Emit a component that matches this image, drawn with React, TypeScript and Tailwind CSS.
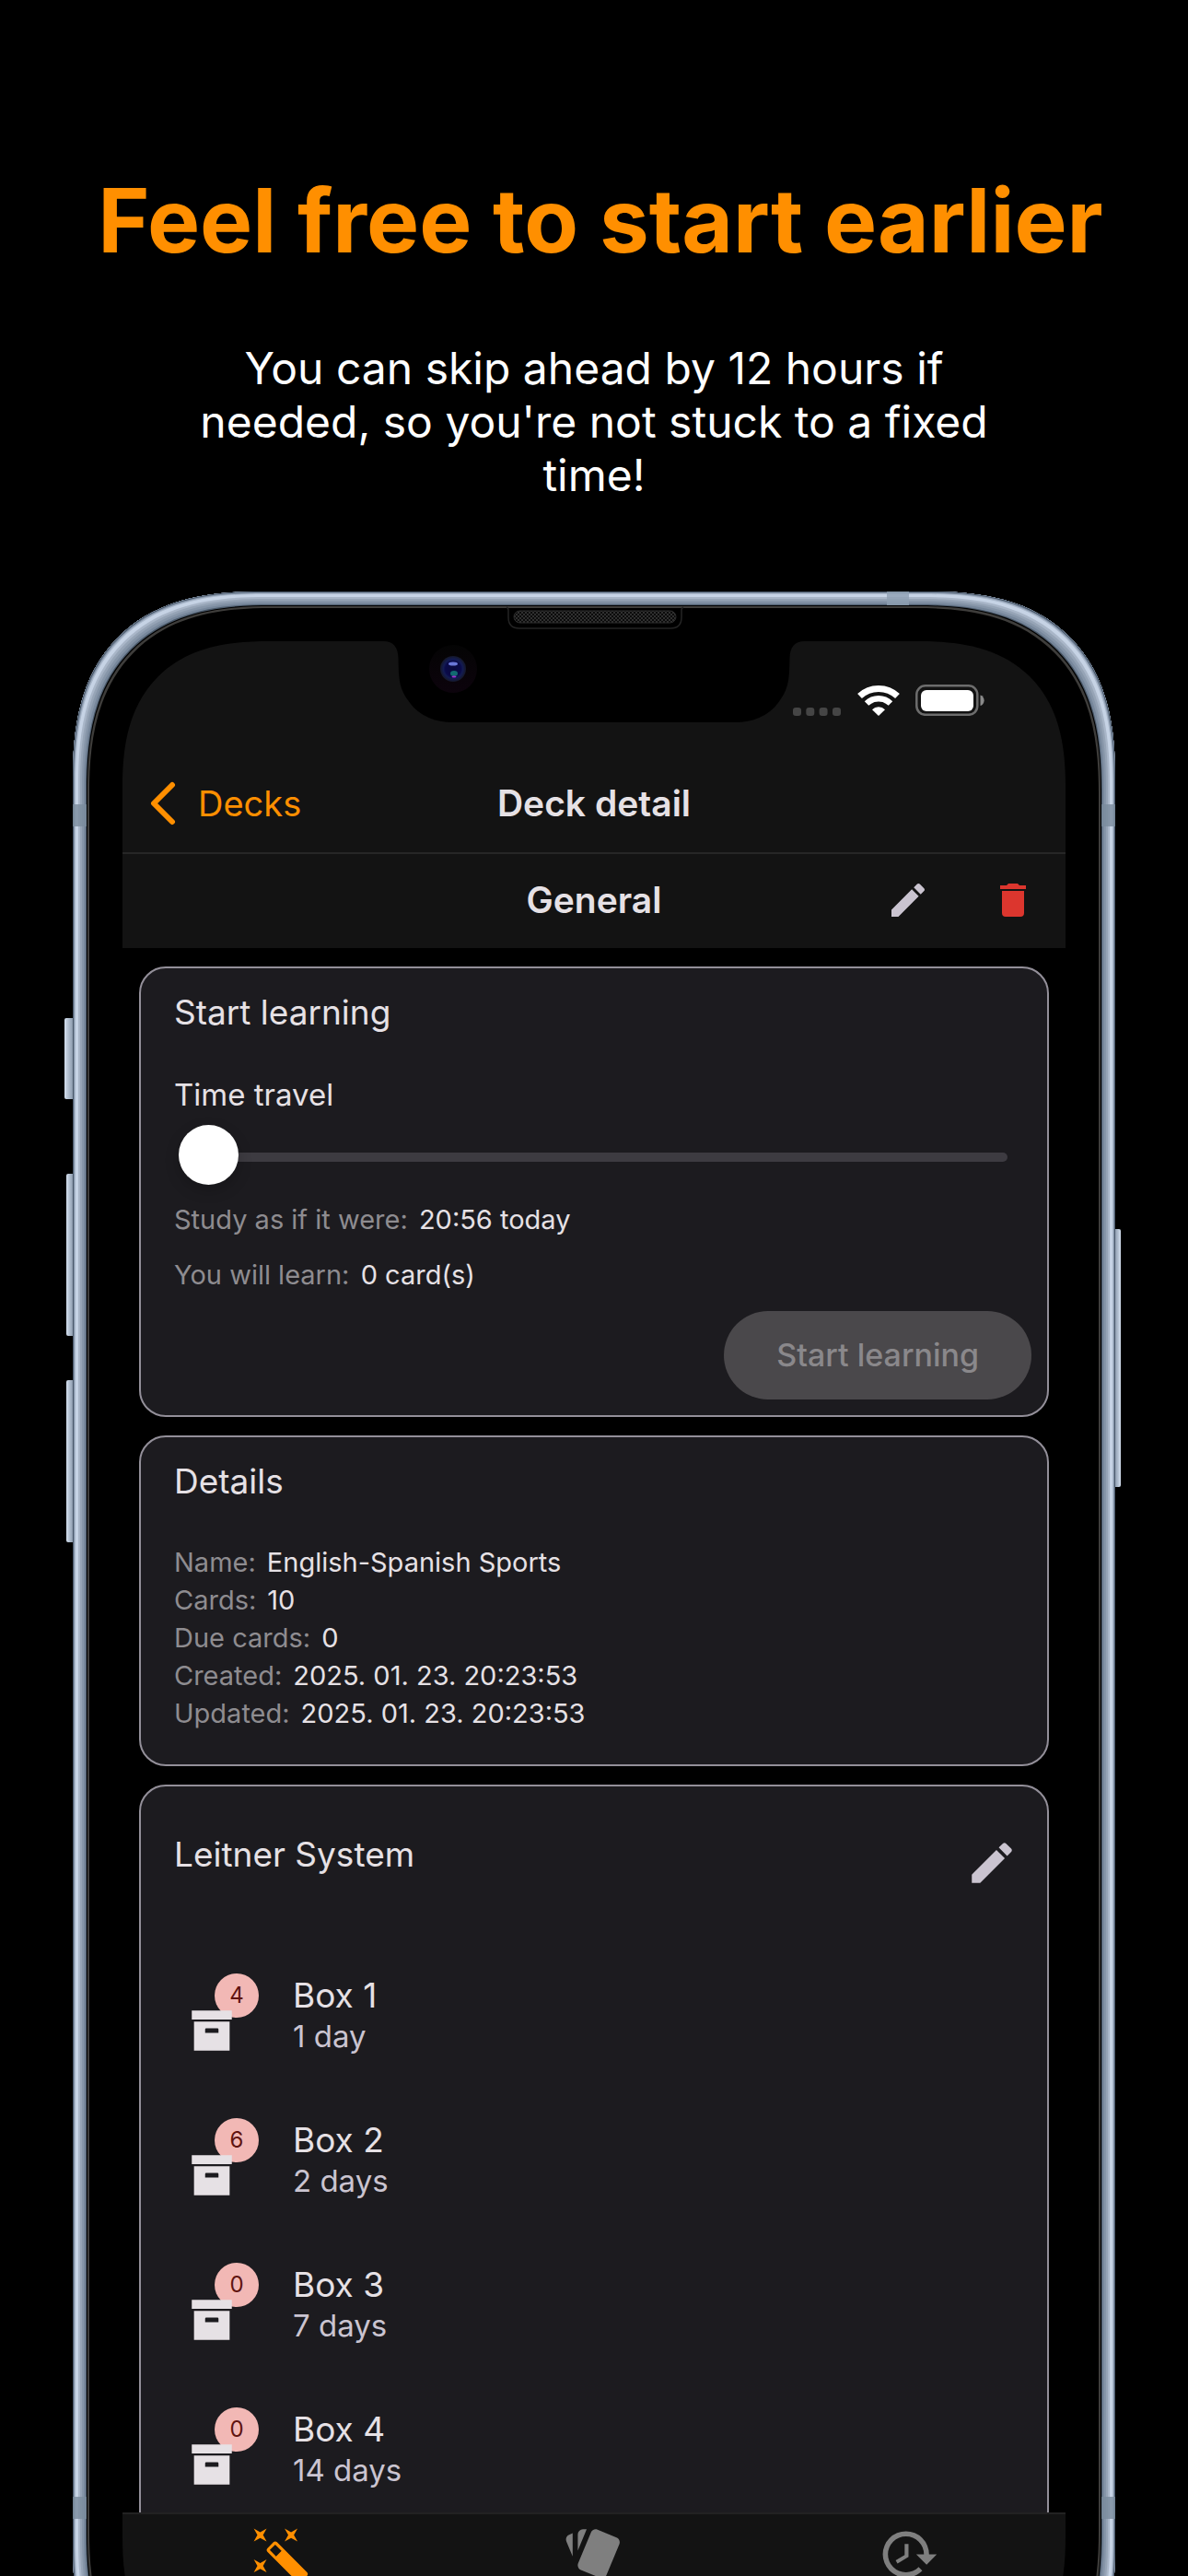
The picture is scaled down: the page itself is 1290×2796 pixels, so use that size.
import React from "react";

const PENCIL =
  "M20.71,7.04C21.1,6.65 21.1,6 20.71,5.63L18.37,3.29C18,2.9 17.35,2.9 16.96,3.29L15.12,5.12L18.87,8.87M3,17.25V21H6.75L17.81,9.93L14.06,6.18L3,17.25Z";
const TRASH =
  "M19,4H15.5L14.5,3H9.5L8.5,4H5V6H19M6,19A2,2 0 0,0 8,21H16A2,2 0 0,0 18,19V7H6V19Z";
const ARCHIVE =
  "M3,3H21V7H3V3M4,8H20V21H4V8M9.5,11A0.5,0.5 0 0,0 9,11.5V13H15V11.5A0.5,0.5 0 0,0 14.5,11H9.5Z";
const WAND =
  "M7.5,5.6L5,7L6.4,4.5L5,2L7.5,3.4L10,2L8.6,4.5L10,7L7.5,5.6M19.5,15.4L22,14L20.6,16.5L22,19L19.5,17.6L17,19L18.4,16.5L17,14L19.5,15.4M22,2L20.6,4.5L22,7L19.5,5.6L17,7L18.4,4.5L17,2L19.5,3.4L22,2M13.34,12.78L15.78,10.34L13.66,8.22L11.22,10.66L13.34,12.78M14.37,7.29L16.71,9.63C17.1,10 17.1,10.65 16.71,11.04L5.04,22.71C4.65,23.1 4,23.1 3.63,22.71L1.29,20.37C0.9,20 0.9,19.35 1.29,18.96L12.96,7.29C13.35,6.9 14,6.9 14.37,7.29Z";
const CARDS =
  "M21.47,4.35L20.13,3.79V12.82L22.56,6.96C22.97,5.94 22.5,4.77 21.47,4.35M1.97,8.05L6.93,20C7.24,20.77 7.97,21.24 8.74,21.26C9,21.26 9.27,21.21 9.53,21.1L16.9,18.05C17.65,17.74 18.11,17 18.13,16.26C18.14,16 18.09,15.71 18,15.45L13,3.5C12.71,2.73 11.97,2.26 11.19,2.25C10.93,2.25 10.67,2.31 10.42,2.4L3.06,5.45C2.04,5.87 1.55,7.04 1.97,8.05M18.12,4.25A2,2 0 0,0 16.12,2.25H14.67L18.12,10.59";
const HISTORY =
  "M13.5,8H12V13L16.28,15.54L17,14.33L13.5,12.25V8M13,3A9,9 0 0,0 4,12H1L4.96,16.03L9,12H6A7,7 0 0,1 13,5A7,7 0 0,1 20,12A7,7 0 0,1 13,19C11.07,19 9.32,18.21 8.06,16.94L6.64,18.36C8.27,20 10.5,21 13,21A9,9 0 0,0 22,12A9,9 0 0,0 13,3";

function Icon({ d, className }: { d: string; className: string }) {
  return (
    <svg viewBox="0 0 24 24" fill="currentColor" className={className} aria-hidden="true">
      <path d={d} />
    </svg>
  );
}

const details = [
  { label: "Name:", value: "English-Spanish Sports" },
  { label: "Cards:", value: "10" },
  { label: "Due cards:", value: "0" },
  { label: "Created:", value: "2025. 01. 23. 20:23:53" },
  { label: "Updated:", value: "2025. 01. 23. 20:23:53" },
];

const boxes = [
  { name: "Box 1", interval: "1 day", count: 4 },
  { name: "Box 2", interval: "2 days", count: 6 },
  { name: "Box 3", interval: "7 days", count: 0 },
  { name: "Box 4", interval: "14 days", count: 0 },
];

const tabs = [
  { label: "Decks", icon: WAND, color: "text-[#ff8f00]" },
  { label: "Cards", icon: CARDS, color: "text-[#7f7f7f]" },
  { label: "History", icon: HISTORY, color: "text-[#7f7f7f]" },
];

function Card({ className, children }: { className: string; children: React.ReactNode }) {
  return (
    <section className={"flex shrink-0 flex-col rounded-[29px] border-2 border-[#938f99] bg-[#1c1b1f] " + className}>
      {children}
    </section>
  );
}

function Notch() {
  return (
    <svg
      viewBox="0 0 458 130"
      className="absolute left-1/2 top-[16px] h-[130px] w-[458px] -translate-x-1/2"
      aria-hidden="true"
    >
      <defs>
        <pattern id="mesh" width="4" height="4" patternUnits="userSpaceOnUse">
          <rect width="4" height="4" fill="#0b0b0b" />
          <rect width="2" height="2" fill="#303030" />
          <rect x="2" y="2" width="2" height="2" fill="#303030" />
        </pattern>
        <radialGradient id="lens">
          <stop offset="0" stopColor="#0a0a3c" />
          <stop offset="0.6" stopColor="#0a0a48" />
          <stop offset="0.75" stopColor="#131b52" />
          <stop offset="1" stopColor="#151828" />
        </radialGradient>
        <linearGradient id="halo" x1="0" y1="0" x2="0" y2="1">
          <stop offset="0" stopColor="#040404" />
          <stop offset="1" stopColor="#0c030c" />
        </linearGradient>
      </defs>
      <path d="M0 38C12 38 16 45 16.500 56C17 78 17 88 27 102C38 119 56 126 76 126H382C402 126 420 119 431 102C441 88 441 78 441.500 56C442 45 446 38 458 38Z" fill="#000" />
      <path d="M134 1Q136 2 136 4V12Q136 24 148 24H312Q324 24 324 12V4Q324 2 326 1" fill="none" stroke="#242424" strokeWidth="1.500" />
      <rect x="142" y="5" width="176" height="13" rx="6.500" fill="url(#mesh)" stroke="#2c2c2c" />
      <circle cx="76" cy="68" r="26" fill="url(#halo)" />
      <circle cx="76" cy="68" r="14" fill="url(#lens)" />
      <ellipse cx="76" cy="62.500" rx="5" ry="2" fill="#6a78d8" />
      <ellipse cx="77" cy="73" rx="4" ry="3" fill="#116a70" />
      <ellipse cx="77" cy="76.500" rx="2.500" ry="1" fill="#a02fd0" />
    </svg>
  );
}

function StatusBar() {
  return (
    <div className="flex h-[124px] items-center justify-end pr-[88px] pt-1">
      <svg viewBox="0 0 208 34" className="h-[34px] w-[208px]" aria-hidden="true">
        <g fill="#454545">
          <rect x="0" y="25" width="9" height="9" rx="3" />
          <rect x="14.300" y="25" width="9" height="9" rx="3" />
          <rect x="28.600" y="25" width="9" height="9" rx="3" />
          <rect x="43" y="25" width="9" height="9" rx="3" />
        </g>
        <g fill="none" stroke="#fff">
          <path d="M72.500 12.500A30 30 0 0 1 113.500 12.500" strokeWidth="7" />
          <path d="M80 20.500A19 19 0 0 1 106 20.500" strokeWidth="6.500" />
        </g>
        <path d="M93 34L86 27.200A10 10 0 0 1 100 27.200Z" fill="#fff" />
        <rect x="134.300" y="1.300" width="66" height="31.500" rx="9.500" fill="none" stroke="#6d6d6d" strokeWidth="2.500" />
        <rect x="139" y="6" width="57" height="23" rx="6" fill="#fff" />
        <path d="M203.500 11.500C209 13 209 21.500 203.500 23Z" fill="#8a8a8a" />
      </svg>
    </div>
  );
}

export default function App() {
  return (
    <div className="flex h-screen flex-col overflow-hidden bg-black font-['Inter',sans-serif]">
      <header className="flex flex-col items-center gap-[74px] pt-[181px] text-center">
        <h1 className="whitespace-nowrap pl-[14px] text-[96px] font-bold leading-[116px] text-[#ff8f00]">
          Feel free to start earlier
        </h1>
        <p className="max-w-[900px] text-[48px] leading-[58px] text-white">
          You can skip ahead by 12 hours if needed, so you're not stuck to a fixed time!
        </p>
      </header>

      <div className="relative mx-[79px] mt-[97px] shrink-0">
        <span className="absolute -left-[9px] top-[463px] h-[88px] w-[10px] rounded-l-[2px] bg-linear-to-r from-[#d5e1f0] to-[#8493a6]" />
        <span className="absolute -left-[7px] top-[632px] h-[176px] w-[8px] rounded-l-[2px] bg-linear-to-r from-[#d5e1f0] to-[#8493a6]" />
        <span className="absolute -left-[7px] top-[856px] h-[176px] w-[8px] rounded-l-[2px] bg-linear-to-r from-[#d5e1f0] to-[#8493a6]" />
        <span className="absolute -right-[6px] top-[692px] h-[280px] w-[7px] rounded-r-[2px] bg-linear-to-l from-[#d5e1f0] to-[#8493a6]" />

        <div className="relative flex aspect-[1132/2324] flex-col rounded-[205px] bg-black p-[54px] [corner-shape:superellipse(1.33)] shadow-[inset_0_0_0_1px_#4a596b,inset_0_0_0_2px_#8594a8,inset_0_0_0_3px_#a9b7ca,inset_0_0_0_6px_#c6d3e5,inset_0_0_0_8px_#a9b6c8,inset_0_0_0_10px_#96a4b6,inset_0_0_0_12px_#8796a9,inset_0_0_0_14px_#77879b,inset_0_0_0_15px_#4b5a6b,inset_0_0_0_16px_#000,inset_0_0_0_18px_#3e3d3b]">
          <span className="absolute left-0 top-[231px] h-6 w-[15px] bg-[#7b8c9e]/80" />
          <span className="absolute right-0 top-[231px] h-6 w-[15px] bg-[#7b8c9e]/80" />
          <span className="absolute left-0 bottom-[232px] h-6 w-[15px] bg-[#7b8c9e]/80" />
          <span className="absolute right-0 bottom-[232px] h-6 w-[15px] bg-[#7b8c9e]/80" />
          <span className="absolute right-[224px] top-0 h-[15px] w-6 bg-[#8fa0b3]/80" />

          <div className="flex min-h-0 flex-1 flex-col overflow-hidden rounded-[160px] bg-black [corner-shape:superellipse(1.33)]">
            <div className="bg-[#131313]">
              <StatusBar />
              <nav className="grid h-[107px] grid-cols-[1fr_auto_1fr] items-center border-b-2 border-[#262626] pb-[2px]">
                <button type="button" className="flex items-center gap-[22px] pl-[28px] text-[38px] leading-[48px] text-[#ff8f00]">
                  <svg viewBox="0 0 32 48" className="h-12 w-8" fill="none" stroke="currentColor" strokeWidth="6" strokeLinecap="round" strokeLinejoin="round" aria-hidden="true">
                    <path d="M26 4L6 24L26 44" />
                  </svg>
                  Decks
                </button>
                <h2 className="text-[39px] font-semibold leading-[48px] text-[#e6e1e5]">Deck detail</h2>
              </nav>
              <div className="grid h-[102px] grid-cols-[1fr_auto_1fr] items-center pb-[2px]">
                <h3 className="col-start-2 text-[39px] font-semibold leading-[48px] text-[#e6e1e5]">General</h3>
                <div className="flex justify-end gap-[66px] pr-[33px]">
                  <button type="button" aria-label="Edit deck" className="text-[#cac4d0]">
                    <Icon d={PENCIL} className="size-12" />
                  </button>
                  <button type="button" aria-label="Delete deck" className="text-[#dc362e]">
                    <Icon d={TRASH} className="size-12" />
                  </button>
                </div>
              </div>
            </div>

            <main className="flex min-h-0 flex-1 flex-col gap-5 overflow-hidden px-[18px] pt-5 text-[#e6e1e5]">
              <Card className="pb-[17px] pt-6">
                <h4 className="px-9 text-[37px] leading-[48px]">Start learning</h4>
                <label htmlFor="time-travel" className="mt-[45px] px-9 text-[33px] leading-[40px]">
                  Time travel
                </label>
                <input
                  id="time-travel"
                  type="range"
                  min={0}
                  max={12}
                  defaultValue={0}
                  className="ml-[41px] mr-[43px] mt-[15px] h-[65px] appearance-none bg-transparent [&::-webkit-slider-runnable-track]:h-[10px] [&::-webkit-slider-runnable-track]:rounded-full [&::-webkit-slider-runnable-track]:bg-[#3d3b41] [&::-webkit-slider-thumb]:-mt-[30px] [&::-webkit-slider-thumb]:size-[65px] [&::-webkit-slider-thumb]:appearance-none [&::-webkit-slider-thumb]:rounded-full [&::-webkit-slider-thumb]:bg-white [&::-webkit-slider-thumb]:shadow-[0_6px_16px_rgba(0,0,0,0.2)]"
                />
                <p className="mt-[15px] px-9 text-[29px] leading-[41px]">
                  <span className="mr-1 text-[#8e8c90]">Study as if it were:</span> 20:56 today
                </p>
                <p className="mt-[19px] px-9 text-[29px] leading-[41px]">
                  <span className="mr-1 text-[#8e8c90]">You will learn:</span> 0 card(s)
                </p>
                <button
                  type="button"
                  disabled
                  className="mr-[17px] mt-[19px] h-24 self-end rounded-full bg-[#4a484b] px-[57px] text-[34px] font-medium leading-[40px] text-[#8a888b]"
                >
                  Start learning
                </button>
              </Card>

              <Card className="px-9 pb-[35px] pt-6">
                <h4 className="text-[37px] leading-[48px]">Details</h4>
                <dl className="mt-[43px] text-[29px] leading-[41px]">
                  {details.map((row) => (
                    <div key={row.label} className="flex gap-3">
                      <dt className="text-[#8e8c90]">{row.label}</dt>
                      <dd>{row.value}</dd>
                    </div>
                  ))}
                </dl>
              </Card>

              <Card className="pb-12 pl-9 pr-[31px] pt-[50px]">
                <div className="flex h-[62px] justify-between">
                  <h4 className="text-[37px] leading-[48px]">Leitner System</h4>
                  <button type="button" aria-label="Edit boxes" className="self-end text-[#cac4d0]">
                    <Icon d={PENCIL} className="size-[58px]" />
                  </button>
                </div>
                <ul className="mt-[91px] flex flex-col gap-[66px]">
                  {boxes.map((box) => (
                    <li key={box.name} className="flex pl-3">
                      <div className="relative flex h-[91px] w-20 items-end">
                        <span className="absolute right-0 top-0 flex size-12 items-center justify-center rounded-full bg-[#f2b8b5] text-[24px] leading-[32px] text-[#601410]">
                          {box.count}
                        </span>
                        <Icon d={ARCHIVE} className="relative size-[58px]" />
                      </div>
                      <div className="ml-[37px]">
                        <p className="text-[37px] leading-[48px]">{box.name}</p>
                        <p className="text-[33px] leading-[40px] text-[#cac4d0]">{box.interval}</p>
                      </div>
                    </li>
                  ))}
                </ul>
              </Card>
            </main>

            <nav className="grid h-[185px] shrink-0 grid-cols-3 items-start border-t-2 border-[#222222] bg-[#131313] pt-[10px]">
              {tabs.map((tab) => (
                <button key={tab.label} type="button" aria-label={tab.label} className={"flex justify-center " + tab.color}>
                  <Icon d={tab.icon} className="size-[67px] -scale-x-100" />
                </button>
              ))}
            </nav>
          </div>
          <Notch />
        </div>
      </div>
    </div>
  );
}
